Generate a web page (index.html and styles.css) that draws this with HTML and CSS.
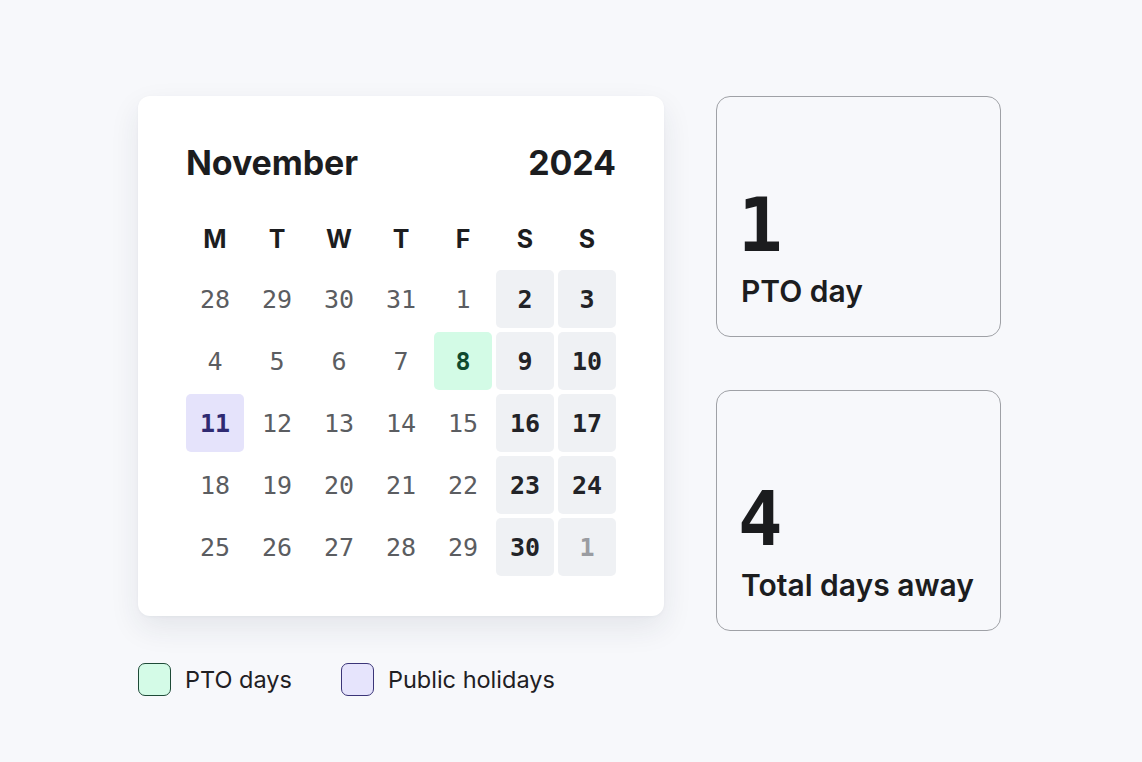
FILE: index.html
```html
<!DOCTYPE html>
<html lang="en">
<head>
<meta charset="utf-8">
<title>PTO calendar</title>
<link rel="stylesheet" href="styles.css">
</head>
<body>
<main class="page">
  <section class="left">
    <div class="calendar">
      <header class="cal-head">
        <span>November</span>
        <span>2024</span>
      </header>
      <div class="weekdays">
        <span>M</span><span>T</span><span>W</span><span>T</span><span>F</span><span>S</span><span>S</span>
      </div>
      <div class="days">
        <span class="day">28</span><span class="day">29</span><span class="day">30</span><span class="day">31</span><span class="day">1</span><span class="day we">2</span><span class="day we">3</span>
        <span class="day">4</span><span class="day">5</span><span class="day">6</span><span class="day">7</span><span class="day pto">8</span><span class="day we">9</span><span class="day we">10</span>
        <span class="day hol">11</span><span class="day">12</span><span class="day">13</span><span class="day">14</span><span class="day">15</span><span class="day we">16</span><span class="day we">17</span>
        <span class="day">18</span><span class="day">19</span><span class="day">20</span><span class="day">21</span><span class="day">22</span><span class="day we">23</span><span class="day we">24</span>
        <span class="day">25</span><span class="day">26</span><span class="day">27</span><span class="day">28</span><span class="day">29</span><span class="day we">30</span><span class="day we out">1</span>
      </div>
    </div>
    <div class="legend">
      <div class="legend-item"><span class="swatch swatch-pto"></span>PTO days</div>
      <div class="legend-item"><span class="swatch swatch-hol"></span>Public holidays</div>
    </div>
  </section>
  <section class="stats">
    <div class="stat">
      <div class="stat-num">1</div>
      <div class="stat-label">PTO day</div>
    </div>
    <div class="stat">
      <div class="stat-num">4</div>
      <div class="stat-label">Total days away</div>
    </div>
  </section>
</main>
</body>
</html>
```

FILE: styles.css
```css
* { box-sizing: border-box; }
html, body { margin: 0; padding: 0; }
body {
  background: #f7f8fb;
  font-family: Inter, "Noto Sans", "Liberation Sans", sans-serif;
  color: #1d1e20;
  width: 1142px;
  height: 762px;
  overflow: hidden;
}
.page {
  display: flex;
  align-items: flex-start;
  gap: 52px;
  padding: 96px 0 0 138px;
}
.left {
  display: flex;
  flex-direction: column;
  gap: 47px;
}
.calendar {
  width: 526px;
  background: #ffffff;
  border-radius: 12px;
  padding: 47px 48px 40px;
  box-shadow: 0 12px 30px rgba(30, 40, 70, 0.09), 0 1px 3px rgba(30, 40, 70, 0.04);
}
.cal-head {
  display: flex;
  justify-content: space-between;
  font-size: 34px;
  font-weight: 700;
  line-height: 40px;
  letter-spacing: -0.1px;
  color: #1c1d1f;
}
.weekdays {
  display: grid;
  grid-template-columns: repeat(7, 58px);
  column-gap: 4px;
  margin-top: 40px;
  height: 32px;
  align-items: center;
  justify-items: center;
  font-size: 25px;
  font-weight: 700;
  color: #1c1d1f;
}
.days {
  margin-top: 15px;
  display: grid;
  grid-template-columns: repeat(7, 58px);
  grid-auto-rows: 58px;
  gap: 4px;
}
.day {
  display: flex;
  align-items: center;
  justify-content: center;
  border-radius: 5px;
  font-family: "DejaVu Sans Mono", "Liberation Mono", monospace;
  font-size: 25px;
  color: #5b5d61;
}
.day.we {
  background: #eff1f4;
  color: #222327;
  font-weight: 700;
}
.day.we.out { color: #9a9ca1; }
.day.pto {
  background: #d3fbe6;
  color: #0f4a2f;
  font-weight: 700;
}
.day.hol {
  background: #e5e3fb;
  color: #2f2a72;
  font-weight: 700;
}
.legend {
  display: flex;
  gap: 49px;
  font-size: 23.5px;
  color: #1f2023;
}
.legend-item {
  display: flex;
  align-items: center;
  gap: 14px;
}
.swatch {
  width: 33px;
  height: 33px;
  border-radius: 7px;
  border: 1.5px solid;
}
.swatch-pto { background: #d4fbe7; border-color: #1e4a37; }
.swatch-hol { background: #e6e4fc; border-color: #3b3578; }
.stats {
  display: flex;
  flex-direction: column;
  gap: 53px;
}
.stat {
  width: 285px;
  height: 241px;
  border: 1.5px solid #9fa1a6;
  border-radius: 14px;
  display: flex;
  flex-direction: column;
  justify-content: flex-end;
  padding: 0 24px 27px;
}
.stat-num {
  font-family: "DejaVu Sans Mono", "Liberation Mono", monospace;
  font-weight: 700;
  font-size: 74px;
  line-height: 74px;
  color: #1b1c1e;
  margin-left: -3px;
}
.stat-label {
  margin-top: 11px;
  font-size: 30px;
  font-weight: 600;
  line-height: 36px;
  color: #1c1d1f;
}
```
